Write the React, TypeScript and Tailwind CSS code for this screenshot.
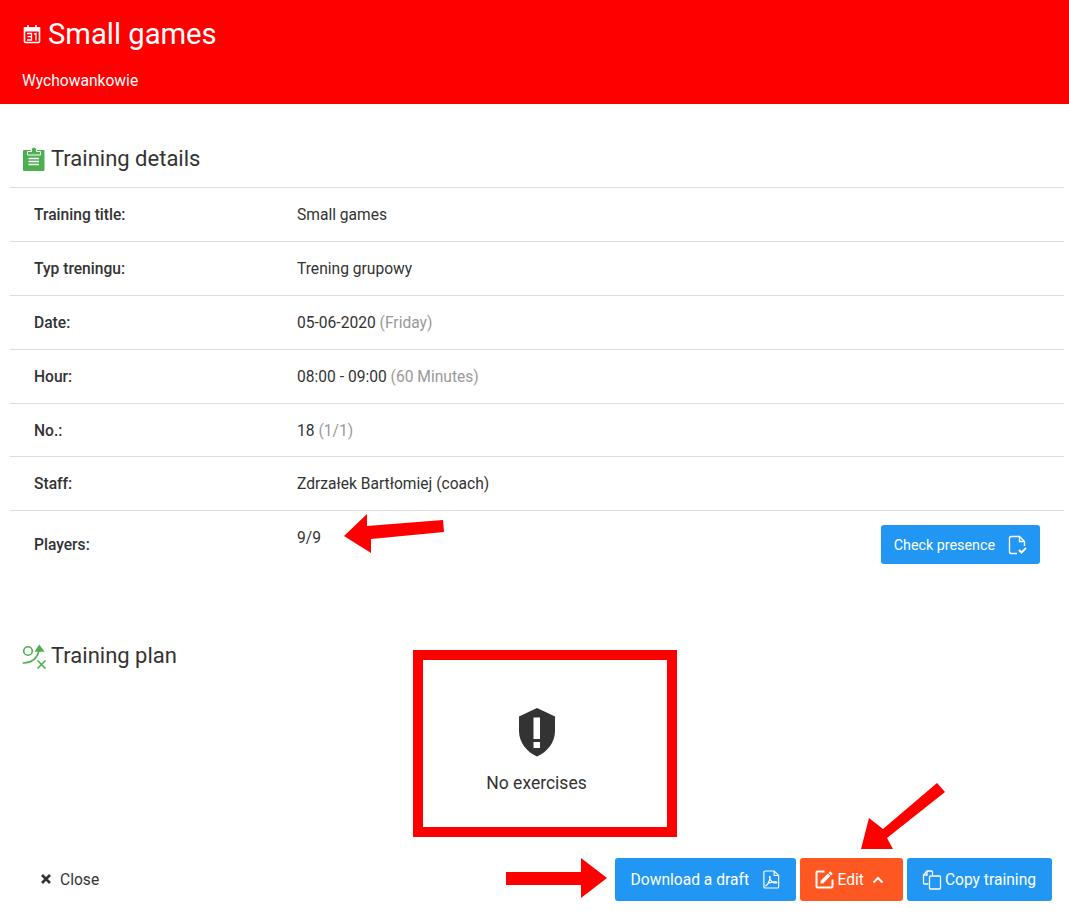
const ROWS = [
  { label: 'Training title:', value: 'Small games' },
  { label: 'Typ treningu:', value: 'Trening grupowy' },
  { label: 'Date:', value: '05-06-2020', muted: '(Friday)' },
  { label: 'Hour:', value: '08:00 - 09:00', muted: '(60 Minutes)' },
  { label: 'No.:', value: '18', muted: '(1/1)' },
  { label: 'Staff:', value: 'Zdrzałek Bartłomiej (coach)' },
]

function CalendarIcon() {
  return (
    <svg width="18" height="20" viewBox="0 0 18 20" fill="none" className="ml-[1px] mr-[7px] shrink-0">
      <path d="M1.500 4h15v13.500a1 1 0 0 1-1 1h-13a1 1 0 0 1-1-1z" stroke="#fff" strokeWidth="1.600" />
      <path d="M1 3.500h16v4H1z" fill="#fff" />
      <path d="M5 1v3M13 1v3" stroke="#fff" strokeWidth="1.600" />
      <path d="M4 9.500h4.500v6.500H4M4.500 12.700h4M11 10.200l2-.7v7" stroke="#fff" strokeWidth="1.300" />
    </svg>
  )
}

function ClipboardIcon() {
  return (
    <svg width="22" height="25" viewBox="0 0 22 25" className="shrink-0">
      <rect x="0" y="4" width="21.500" height="21" rx="1" fill="#4caf50" />
      <path d="M4.500 9V5.500H8.500V3.500a2.500 2.500 0 0 1 5 0V5.500H17.500V9z" fill="#4caf50" stroke="#fff" strokeWidth="1" />
      <path d="M5.500 12.500h10.500M5.500 15.500h10.500M5.500 18.500h10.500" stroke="#fff" strokeWidth="1.700" />
    </svg>
  )
}

function TacticIcon() {
  return (
    <svg width="26" height="26" viewBox="0 0 26 26" fill="none" stroke="#4caf50" strokeWidth="1.600" className="shrink-0">
      <circle cx="6" cy="8" r="4.300" />
      <path d="M0.700 20c8 .5 15-4 16.600-14" />
      <path d="M14 8l3.300-5L21 8z" fill="#4caf50" />
      <path d="M15.500 17.500l8 8M23.500 17.500l-8 8" />
    </svg>
  )
}

function PresenceIcon() {
  return (
    <svg width="20" height="20" viewBox="0 0 20 20" fill="none" stroke="#fff" strokeWidth="1.400" className="shrink-0">
      <path d="M10 18.500H4a1.500 1.500 0 0 1-1.500-1.500V3A1.500 1.500 0 0 1 4 1.500h8.500l5 5V11" />
      <path d="M12.500 1.500v5h5" />
      <path d="M12 15l2.500 2.500 4.500-4.500" strokeWidth="2" />
    </svg>
  )
}

function PdfIcon() {
  return (
    <svg width="17" height="19" viewBox="0 0 19 21" fill="none" stroke="#fff" strokeWidth="1.300" className="shrink-0">
      <path d="M2.500 1h10l5 5v12.500a1.500 1.500 0 0 1-1.500 1.500H2.500A1.500 1.500 0 0 1 1 18.500v-16A1.500 1.500 0 0 1 2.500 1z" />
      <path d="M12.500 1v5h5" />
      <path d="M2.500 18c2-1 4.500-5 5.500-9.500.3-1.500-.5-2-.8-1-.4 1.500 1.800 5.500 4.300 6.500 2 .7 4.500.5 4-.5-.5-.8-5-.5-9.500 1" />
    </svg>
  )
}

function EditIcon() {
  return (
    <svg width="19" height="19" viewBox="2.500 2.500 19 19" className="mr-[1px] shrink-0">
      <path
        fill="#fff"
        d="M5,3C3.890,3 3,3.890 3,5V19A2,2 0 0,0 5,21H19A2,2 0 0,0 21,19V12H19V19H5V5H12V3H5M17.780,4C17.610,4 17.430,4.070 17.300,4.200L16.080,5.410L18.580,7.910L19.800,6.700C20.060,6.440 20.060,6 19.800,5.750L18.250,4.200C18.120,4.070 17.950,4 17.780,4M15.370,6.120L8,13.500V16H10.500L17.870,8.620L15.370,6.120Z"
      />
    </svg>
  )
}

function CopyIcon() {
  return (
    <svg width="20" height="20" viewBox="0 0 20 20" fill="none" stroke="#fff" strokeWidth="1.300" className="shrink-0">
      <path d="M6.500 14H2.500a1 1 0 0 1-1-1V5l3.500-4h4.500a1 1 0 0 1 1 1v3" />
      <path d="M5 1v4H1.500" />
      <rect x="7.500" y="6" width="11" height="13" rx="1" />
    </svg>
  )
}

function ShieldIcon() {
  return (
    <svg width="38" height="49" viewBox="0 0 38 49" className="shrink-0">
      <path fill="#333" d="M19 0L37 8.500V23C37 34 29.500 44 19 48.500C8.500 44 1 34 1 23V8.500Z" />
      <rect x="15.500" y="9.500" width="6.500" height="21.500" fill="#fff" />
      <rect x="15.500" y="34" width="6.500" height="6" fill="#fff" />
    </svg>
  )
}

export default function App() {
  return (
    <div className="relative w-[1069px] h-[913px] overflow-hidden bg-white font-['Roboto',sans-serif] text-[#333]">
      <header className="h-[104px] bg-[#ff0000] px-[22px] pt-[15px] text-white">
        <div className="flex items-center h-[38px]">
          <CalendarIcon />
          <h1 className="text-[29.2px] leading-[38px] font-normal">Small games</h1>
        </div>
        <p className="mt-[16px] text-[15.6px] leading-[24px]">Wychowankowie</p>
      </header>

      <section className="pl-[10px] pr-[5px]">
        <h2 className="flex items-center gap-[6px] h-[83px] pl-[13px] pt-[26px] text-[22px] leading-[30px] font-normal">
          <ClipboardIcon />
          Training details
        </h2>
        {ROWS.map((row) => (
          <div key={row.label} className="flex items-center h-[53.88px] pt-[2.6px] border-t border-[#ddd] text-[15.6px]">
            <div className="w-[287px] pl-[24px] font-medium">{row.label}</div>
            <div>
              {row.value}
              {row.muted && <span className="text-[#999]"> {row.muted}</span>}
            </div>
          </div>
        ))}
        <div className="flex items-start h-[68px] border-t border-[#ddd] text-[15.6px]">
          <div className="w-[287px] pl-[24px] pt-[23px] font-medium">Players:</div>
          <div className="pt-[16px]">9/9</div>
          <button className="ml-auto mr-[24px] mt-[14px] flex items-center gap-[12px] h-[39px] pl-[13px] pr-[13px] rounded-[3px] bg-[#2196f3] text-white text-[14.3px]">
            <span className="pt-[2px]">Check presence</span>
            <PresenceIcon />
          </button>
        </div>
      </section>

      <section className="px-[10px]">
        <h2 className="flex items-center gap-[3px] pl-[12px] pt-[63px] text-[22px] leading-[30px] font-normal">
          <TacticIcon />
          Training plan
        </h2>
        <div className="flex flex-col items-center pt-[37px] pl-[4px]">
          <ShieldIcon />
          <p className="mt-[14px] text-[17.5px] leading-[24px]">No exercises</p>
        </div>
      </section>

      <footer className="absolute bottom-[12px] left-0 right-[17px] flex items-center gap-[4px] text-[15.6px]">
        <button className="flex items-center gap-[8px] ml-[40px] mr-auto">
          <svg width="12" height="12" viewBox="0 0 12 12" stroke="#333" strokeWidth="2.600" className="shrink-0">
            <path d="M2 2l8 8M10 2l-8 8" />
          </svg>
          <span className="pt-[2px]">Close</span>
        </button>
        <button className="flex items-center gap-[14px] h-[43px] pl-[16px] pr-[15.500px] rounded-[3px] bg-[#2196f3] text-white">
          <span className="pt-[2px]">Download a draft</span>
          <PdfIcon />
        </button>
        <button className="flex items-center gap-[3px] h-[43px] pl-[15px] pr-[18px] rounded-[3px] bg-[#ff5722] text-white">
          <EditIcon />
          <span className="pt-[2px]">Edit</span>
          <svg width="14" height="14" viewBox="0 0 14 14" fill="none" stroke="#fff" strokeWidth="2" className="ml-[4px] shrink-0">
            <path d="M2.500 9.500L7 5l4.500 4.500" />
          </svg>
        </button>
        <button className="flex items-center gap-[3px] h-[43px] pl-[15px] pr-[16px] rounded-[3px] bg-[#2196f3] text-white">
          <CopyIcon />
          <span className="pt-[2px]">Copy training</span>
        </button>
      </footer>

      {/* red annotations drawn over the screenshot */}
      <div className="absolute left-[413px] top-[650px] w-[264px] h-[187px] border-[10px] border-[#ff0000]" />
      <svg className="absolute inset-0 pointer-events-none" width="1069" height="913" viewBox="0 0 1069 913" fill="#ff0000">
        <polygon points="443,520 444,532 371,539 371,553 344,536 367,514 367,526" />
        <polygon points="506,872 581,872 581,858 607,878 581,898 581,885 506,885" />
        <polygon points="937,783 945,792 887,838 893,849 861,849 869,818 883,829" />
      </svg>
    </div>
  )
}
